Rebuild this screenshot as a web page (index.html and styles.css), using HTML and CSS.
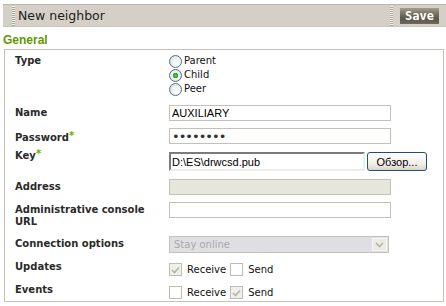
FILE: index.html
```html
<!DOCTYPE html>
<html lang="en">
<head>
    <meta charset="UTF-8">
    <title>New neighbor</title>
    <link rel="stylesheet" href="styles.css">
</head>
<body>
    <div class="page">
        <div class="titlebar">
            <span class="grip"></span>
            <h1 class="title">New neighbor</h1>
            <span class="grip"></span>
            <button class="save-btn">Save</button>
        </div>

        <h2 class="section-title">General</h2>

        <div class="fieldset">
            <div class="row row-type">
                <div class="label">Type</div>
                <div class="value radios">
                    <label class="radio-line"><span class="radio"></span>Parent</label>
                    <label class="radio-line"><span class="radio checked"></span>Child</label>
                    <label class="radio-line"><span class="radio"></span>Peer</label>
                </div>
            </div>

            <div class="row">
                <div class="label">Name</div>
                <div class="value"><input class="input" type="text" value="AUXILIARY"></div>
            </div>

            <div class="row">
                <div class="label">Password<span class="req">*</span></div>
                <div class="value"><input class="input input-pass" type="password" value="drwebpwd"></div>
            </div>

            <div class="row row-key">
                <div class="label">Key<span class="req">*</span></div>
                <div class="value file">
                    <div class="file-path">D:\ES\drwcsd.pub</div>
                    <button class="browse-btn">Обзор...</button>
                </div>
            </div>

            <div class="row">
                <div class="label">Address</div>
                <div class="value"><input class="input" type="text" disabled></div>
            </div>

            <div class="row row-admin">
                <div class="label">Administrative console URL</div>
                <div class="value"><input class="input" type="text"></div>
            </div>

            <div class="row row-conn">
                <div class="label">Connection options</div>
                <div class="value">
                    <div class="select">
                        <span class="select-text">Stay online</span>
                        <span class="select-arrow">
                            <svg width="9" height="6" viewBox="0 0 9 6">
                                <path d="M1 1 L4.5 4.5 L8 1" fill="none" stroke="#b4b4aa" stroke-width="1.6"/>
                            </svg>
                        </span>
                    </div>
                </div>
            </div>

            <div class="row row-updates">
                <div class="label">Updates</div>
                <div class="value checks">
                    <span class="check checked">
                        <svg width="9" height="8" viewBox="0 0 9 8"><path d="M1 4 L3.5 6.5 L8 1.5" fill="none" stroke="#b2b2a8" stroke-width="1.6"/></svg>
                    </span>
                    <span class="check-text">Receive</span>
                    <span class="check"></span>
                    <span class="check-text">Send</span>
                </div>
            </div>

            <div class="row row-events">
                <div class="label">Events</div>
                <div class="value checks">
                    <span class="check"></span>
                    <span class="check-text">Receive</span>
                    <span class="check checked">
                        <svg width="9" height="8" viewBox="0 0 9 8"><path d="M1 4 L3.5 6.5 L8 1.5" fill="none" stroke="#b2b2a8" stroke-width="1.6"/></svg>
                    </span>
                    <span class="check-text">Send</span>
                </div>
            </div>
        </div>
    </div>
</body>
</html>
```

FILE: styles.css
```css
* {
    margin: 0;
    padding: 0;
    box-sizing: border-box;
}

body {
    font-family: "DejaVu Sans", sans-serif;
    font-size: 10px;
    color: #333;
    background: #fff;
}

.page {
    padding: 4px 2px 0 3px;
}

/* title bar */
.titlebar {
    display: flex;
    align-items: center;
    height: 23px;
    margin-right: -2px;
    background: #d4d0c8;
    border-top: 1px solid #bab6ac;
    border-bottom: 1px solid #c9c5bb;
}

.grip {
    width: 3px;
    height: 20px;
    margin-left: 9px;
    background: repeating-linear-gradient(to bottom, #f2f0ea 0, #f2f0ea 1px, #aaa69b 1px, #aaa69b 2px);
}

.title {
    flex: 1;
    margin-left: 3px;
    font-size: 12.5px;
    font-weight: normal;
    color: #222;
}

.save-btn {
    width: 39px;
    height: 16px;
    margin: 0 7px 0 7px;
    border: none;
    background: linear-gradient(#a29e8e 0%, #6c685a 45%, #5a5648 70%, #6e6a5c 100%);
    color: #fff;
    font-family: "DejaVu Sans Mono", monospace;
    font-weight: bold;
    font-size: 12px;
    line-height: 16px;
}

.section-title {
    margin: 6px 0 2px;
    font-family: "Liberation Sans", sans-serif;
    font-size: 12px;
    line-height: 14px;
    font-weight: bold;
    color: #5f9900;
}

/* form */
.fieldset {
    margin-left: 1px;
    padding: 4px 0 2px 10px;
    border: 1px solid #c6c2ba;
}

.row {
    display: flex;
    align-items: flex-start;
    margin-bottom: 7px;
}

.label {
    flex: none;
    width: 154px;
    padding-top: 2px;
    padding-right: 10px;
    font-weight: bold;
    line-height: 12px;
    color: #2a2a2a;
}

.req {
    color: #6aaa00;
    vertical-align: 2px;
    font-size: 10px;
}

.value {
    flex: none;
    color: #111;
}

.row-type {
    margin-bottom: 9px;
}

.row-type .label {
    padding-top: 1px;
}

.row-key {
    margin-bottom: 8px;
}

.row-key .label {
    margin-top: -5px;
}

.row-admin {
    margin-bottom: 8px;
}

.row-conn {
    margin-bottom: 6px;
}

.row-updates {
    margin-bottom: 6px;
}

.row-events {
    margin-bottom: 0;
}

.input {
    display: block;
    width: 222px;
    height: 16px;
    padding: 0 2px;
    border: 1px solid #c2c1b8;
    background: #fff;
    font-family: "Liberation Sans", sans-serif;
    font-size: 11px;
    color: #000;
    outline: none;
}

.input:disabled {
    background: #e6e6da;
}

.input-pass {
    font-family: "DejaVu Sans", sans-serif;
    font-size: 13px;
    letter-spacing: -1px;
    color: #333;
}

/* radios */
.radio-line {
    display: flex;
    align-items: center;
    height: 14px;
    line-height: 14px;
    color: #111;
}

.radio {
    width: 13px;
    height: 13px;
    margin-right: 2px;
    border: 1px solid #4a6f98;
    border-radius: 50%;
    background: radial-gradient(circle at 65% 65%, #ffffff 0, #f4f4f0 40%, #d8d8d0 100%);
}

.radio.checked {
    background: radial-gradient(circle, #5fd25f 0, #24a024 2.5px, #f4f4f0 3px, #f4f4f0 45%, #d8d8d0 100%);
}

/* file chooser */
.file {
    display: flex;
    align-items: center;
    margin-top: 1px;
}

.file-path {
    width: 196px;
    height: 19px;
    padding: 1px 0 0 1px;
    border: 2px solid;
    border-color: #7b7b7b #eeeeea #eeeeea #7b7b7b;
    font-family: "Liberation Sans", sans-serif;
    font-size: 11px;
    line-height: 14px;
    color: #000;
}

.browse-btn {
    width: 60px;
    height: 19px;
    margin-left: 2px;
    border: 1px solid #244c7c;
    border-radius: 3px;
    background: linear-gradient(#ffffff 0%, #f2f1ea 60%, #d9d5cb 100%);
    font-family: "Liberation Sans", sans-serif;
    font-size: 11px;
    color: #000;
}

/* select */
.select {
    display: flex;
    align-items: center;
    justify-content: space-between;
    width: 220px;
    height: 17px;
    padding: 0 1px 0 4px;
    border: 1px solid #c3c3bb;
    background: #dfdfe3;
}

.select-text {
    color: #a9a9a9;
    font-size: 10px;
}

.select-arrow {
    display: flex;
    align-items: center;
    justify-content: center;
    width: 15px;
    height: 13px;
    border: 1px solid #f6f6f2;
    background: #ebebe4;
}

/* checkboxes */
.checks {
    display: flex;
    align-items: center;
    height: 13px;
    margin-top: 4px;
}

.check {
    display: flex;
    align-items: center;
    justify-content: center;
    width: 13px;
    height: 13px;
    border: 1px solid #bdbdb3;
    background: #fff;
}

.check.checked {
    background: #f0f0ea;
}

.check-text {
    margin: 0 4px 0 5px;
    color: #111;
}
```
